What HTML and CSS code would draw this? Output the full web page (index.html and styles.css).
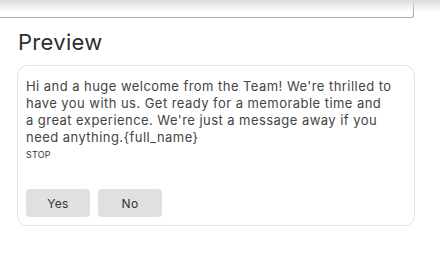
FILE: index.html
```html
<!DOCTYPE html>
<html lang="en">
<head>
  <meta charset="UTF-8">
  <title>Preview</title>
  <link rel="stylesheet" href="styles.css">
</head>
<body>
  <div class="top-shadow"></div>
  <div class="page">
    <div class="field-end"></div>

    <h2 class="title">Preview</h2>

    <div class="card">
      <p class="message">Hi and a huge welcome from the Team! We're thrilled to<br>
        have you with us. Get ready for a memorable time and<br>
        a great experience. We're just a message away if you<br>
        need anything.{full_name}</p>
      <div class="stop">STOP</div>
      <div class="actions">
        <button class="btn">Yes</button>
        <button class="btn">No</button>
      </div>
    </div>
  </div>
</body>
</html>
```

FILE: styles.css
```css
body {
  margin: 0;
  font-family: Inter, 'Noto Sans', sans-serif;
  background-color: #fff;
  color: #333;
}
.top-shadow {
  position: absolute;
  top: 0;
  left: 0;
  right: 0;
  height: 12px;
  background: linear-gradient(#dcdcdc, rgba(255, 255, 255, 0));
  pointer-events: none;
}
.page {
  width: 398px;
  padding-left: 17px;
}
.field-end {
  height: 18px;
  margin-left: -17px;
  width: 414px;
  border: 1px solid #aaa;
  border-top: none;
  border-left: none;
  border-bottom-right-radius: 3px;
  box-sizing: border-box;
}
.title {
  margin: 9px 0 0 1px;
  font-size: 22px;
  font-weight: 400;
  line-height: 30px;
  letter-spacing: 0.3px;
  color: #2e2e2e;
}
.card {
  margin-top: 8px;
  border: 1px solid #e4e4e4;
  border-radius: 10px;
  padding: 12px 8px 8px 8px;
  height: 161px;
  box-sizing: border-box;
}
.message {
  margin: 0;
  font-size: 13px;
  line-height: 17px;
  letter-spacing: 0.45px;
  color: #444;
  white-space: nowrap;
}
.stop {
  font-size: 9px;
  margin-top: 3px;
  letter-spacing: 0.2px;
  color: #333;
}
.actions {
  display: flex;
  gap: 8px;
  margin-top: 29px;
}
.btn {
  width: 64px;
  height: 28px;
  border: none;
  border-radius: 4px;
  background-color: #e0e0e0;
  font-family: inherit;
  font-size: 12px;
  letter-spacing: 0.3px;
  color: #333;
}
```
